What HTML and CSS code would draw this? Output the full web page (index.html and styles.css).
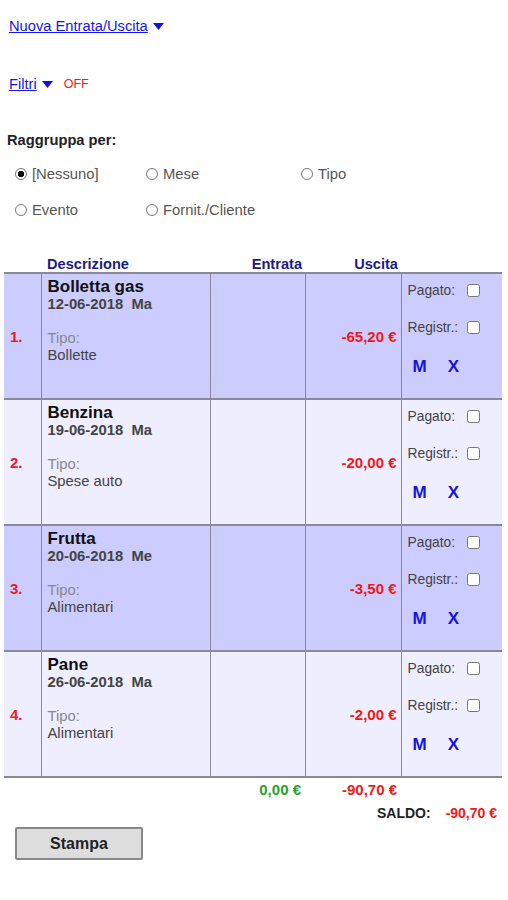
FILE: index.html
```html
<!DOCTYPE html>
<html lang="it">
<head>
<meta charset="utf-8">
<title>Entrate/Uscite</title>
<link rel="stylesheet" href="styles.css">
</head>
<body>
<div class="page">
  <div class="toggle first">
    <a href="#" class="tlink">Nuova Entrata/Uscita</a>
    <svg class="tri" width="11" height="7" viewBox="0 0 11 7"><polygon points="0,0 11,0 5.5,7" fill="#1010e0"/></svg>
  </div>
  <div class="toggle second">
    <a href="#" class="tlink">Filtri</a>
    <svg class="tri" width="11" height="7" viewBox="0 0 11 7"><polygon points="0,0 11,0 5.5,7" fill="#1010e0"/></svg>
    <span class="off">OFF</span>
  </div>

  <div class="group-title">Raggruppa per:</div>
  <div class="radios">
    <label class="radio"><input type="radio" name="g" checked>[Nessuno]</label>
    <label class="radio"><input type="radio" name="g">Mese</label>
    <label class="radio"><input type="radio" name="g">Tipo</label>
    <label class="radio"><input type="radio" name="g">Evento</label>
    <label class="radio"><input type="radio" name="g">Fornit./Cliente</label>
  </div>

  <table class="list">
    <colgroup>
      <col class="c-num"><col class="c-desc"><col class="c-in"><col class="c-out"><col class="c-act">
    </colgroup>
    <thead>
      <tr>
        <th></th>
        <th class="th-desc">Descrizione</th>
        <th class="th-num">Entrata</th>
        <th class="th-num">Uscita</th>
        <th></th>
      </tr>
    </thead>
    <tbody>
      <tr class="odd">
        <td class="num">1.</td>
        <td class="desc">
          <div class="title">Bolletta gas</div>
          <div class="date">12-06-2018&nbsp;&nbsp;Ma</div>
          <div class="tipo-l">Tipo:</div>
          <div class="tipo">Bollette</div>
        </td>
        <td class="amt"></td>
        <td class="amt neg">-65,20 €</td>
        <td class="act">
          <div class="chk"><span>Pagato:</span><input type="checkbox"></div>
          <div class="chk"><span>Registr.:</span><input type="checkbox"></div>
          <div class="btns"><a href="#">M</a><a href="#">X</a></div>
        </td>
      </tr>
      <tr class="even">
        <td class="num">2.</td>
        <td class="desc">
          <div class="title">Benzina</div>
          <div class="date">19-06-2018&nbsp;&nbsp;Ma</div>
          <div class="tipo-l">Tipo:</div>
          <div class="tipo">Spese auto</div>
        </td>
        <td class="amt"></td>
        <td class="amt neg">-20,00 €</td>
        <td class="act">
          <div class="chk"><span>Pagato:</span><input type="checkbox"></div>
          <div class="chk"><span>Registr.:</span><input type="checkbox"></div>
          <div class="btns"><a href="#">M</a><a href="#">X</a></div>
        </td>
      </tr>
      <tr class="odd">
        <td class="num">3.</td>
        <td class="desc">
          <div class="title">Frutta</div>
          <div class="date">20-06-2018&nbsp;&nbsp;Me</div>
          <div class="tipo-l">Tipo:</div>
          <div class="tipo">Alimentari</div>
        </td>
        <td class="amt"></td>
        <td class="amt neg">-3,50 €</td>
        <td class="act">
          <div class="chk"><span>Pagato:</span><input type="checkbox"></div>
          <div class="chk"><span>Registr.:</span><input type="checkbox"></div>
          <div class="btns"><a href="#">M</a><a href="#">X</a></div>
        </td>
      </tr>
      <tr class="even">
        <td class="num">4.</td>
        <td class="desc">
          <div class="title">Pane</div>
          <div class="date">26-06-2018&nbsp;&nbsp;Ma</div>
          <div class="tipo-l">Tipo:</div>
          <div class="tipo">Alimentari</div>
        </td>
        <td class="amt"></td>
        <td class="amt neg">-2,00 €</td>
        <td class="act">
          <div class="chk"><span>Pagato:</span><input type="checkbox"></div>
          <div class="chk"><span>Registr.:</span><input type="checkbox"></div>
          <div class="btns"><a href="#">M</a><a href="#">X</a></div>
        </td>
      </tr>
    </tbody>
    <tfoot>
      <tr>
        <td></td>
        <td></td>
        <td class="tot pos">0,00 €</td>
        <td class="tot neg">-90,70 €</td>
        <td></td>
      </tr>
    </tfoot>
  </table>

  <div class="saldo"><span class="saldo-l">SALDO:</span><span class="neg">-90,70 €</span></div>

  <button class="print" type="button">Stampa</button>
</div>
</body>
</html>
```

FILE: styles.css
```css
html, body {
  margin: 0;
  padding: 0;
  background: #ffffff;
}

body {
  font-family: "Liberation Sans", Arial, sans-serif;
  color: #222;
}

.page {
  padding: 0 6px 0 4px;
}

.toggle {
  display: flex;
  align-items: center;
  height: 16px;
  padding-left: 5px;
}

.toggle.first { margin-top: 18px; }
.toggle.second { margin-top: 42px; }

.tlink {
  color: #1515f0;
  font-size: 14.7px;
  line-height: 16px;
  text-decoration: underline;
}

.tri {
  margin-left: 5px;
  margin-top: 1px;
}

.off {
  color: #ee2222;
  font-size: 12.5px;
  margin-left: 11px;
}

.group-title {
  margin-top: 40px;
  padding-left: 3px;
  font-size: 14.7px;
  font-weight: bold;
  line-height: 16px;
  color: #222;
}

.radios {
  margin-top: 8px;
  display: grid;
  grid-template-columns: 131px 155px 1fr;
  grid-auto-rows: 36px;
  padding-left: 11px;
}

.radio {
  display: flex;
  align-items: center;
  font-size: 14.8px;
  color: #555;
}

.radio input {
  appearance: none;
  -webkit-appearance: none;
  margin: 0 5px 0 0;
  width: 12px;
  height: 12px;
  border: 1px solid #777;
  border-radius: 50%;
  background: #fff;
  box-sizing: border-box;
}

.radio input:checked {
  background: radial-gradient(circle, #111 0 3px, #fff 3.5px);
}

.list {
  margin-top: 28px;
  width: 498px;
  border-collapse: collapse;
  table-layout: fixed;
}

.c-num { width: 37px; }
.c-desc { width: 169px; }
.c-in { width: 95px; }
.c-out { width: 96px; }
.c-act { width: 101px; }

.list th {
  height: 16px;
  padding: 0;
  font-size: 14.6px;
  line-height: 16px;
  font-weight: bold;
  color: #1c1c86;
  border-bottom: 2px solid #8a8a96;
}

.th-desc { text-align: left; padding-left: 6px !important; }
.th-num { text-align: right; padding-right: 3px !important; }

.list tbody tr { height: 126px; }

.list tbody td {
  padding: 0;
  border-bottom: 2px solid #8a8a96;
  border-left: 1px solid #8a8a96;
}

.list tbody td:first-child { border-left: none; }

.odd td { background: #ccccfe; }
.even td { background: #eeeefe; }

.num {
  vertical-align: middle;
  padding-left: 6px !important;
  color: #ee1a2a;
  font-weight: bold;
  font-size: 15px;
}

.desc {
  vertical-align: top;
  padding: 4px 0 0 6px !important;
}

.title {
  font-size: 17px;
  font-weight: bold;
  line-height: 18px;
  color: #111;
}

.date {
  font-size: 14.8px;
  font-weight: bold;
  line-height: 17px;
  color: #444;
}

.tipo-l {
  margin-top: 17px;
  font-size: 14.8px;
  line-height: 17px;
  color: #888;
}

.tipo {
  font-size: 14.8px;
  line-height: 17px;
  color: #444;
}

.amt {
  vertical-align: middle;
  text-align: right;
  padding-right: 4px !important;
  font-size: 15px;
  font-weight: bold;
}

.neg { color: #f01818; }
.pos { color: #2aa02a; }

.act {
  vertical-align: top;
  padding: 7px 0 0 6px !important;
}

.chk {
  display: flex;
  align-items: center;
  height: 18px;
  margin-bottom: 19px;
  font-size: 13.8px;
  color: #444;
}

.chk span { width: 59px; }

.chk input {
  margin: 0;
  width: 13px;
  height: 13px;
}

.chk + .chk { margin-bottom: 22px; }

.btns {
  display: flex;
  gap: 21px;
  padding-left: 5px;
}

.btns a {
  color: #1414e0;
  text-decoration: none;
  font-size: 17px;
  font-weight: bold;
  line-height: 18px;
}

.list tfoot td {
  height: 20px;
  padding: 2px 0 0 0;
  line-height: 20px;
}

.tot {
  text-align: right;
  padding-right: 4px !important;
  font-size: 15px;
  font-weight: bold;
}

.saldo {
  margin-top: 4px;
  display: flex;
  justify-content: flex-end;
  gap: 15px;
  padding-right: 5px;
  font-size: 14px;
  font-weight: bold;
  line-height: 18px;
}

.saldo-l { color: #222; }

.print {
  display: block;
  margin: 5px 0 0 11px;
  width: 128px;
  height: 33px;
  background: #dddddd;
  border: 2px solid #888;
  border-radius: 2px;
  font-family: "Liberation Sans", Arial, sans-serif;
  font-size: 16px;
  font-weight: bold;
  color: #222;
}
```
